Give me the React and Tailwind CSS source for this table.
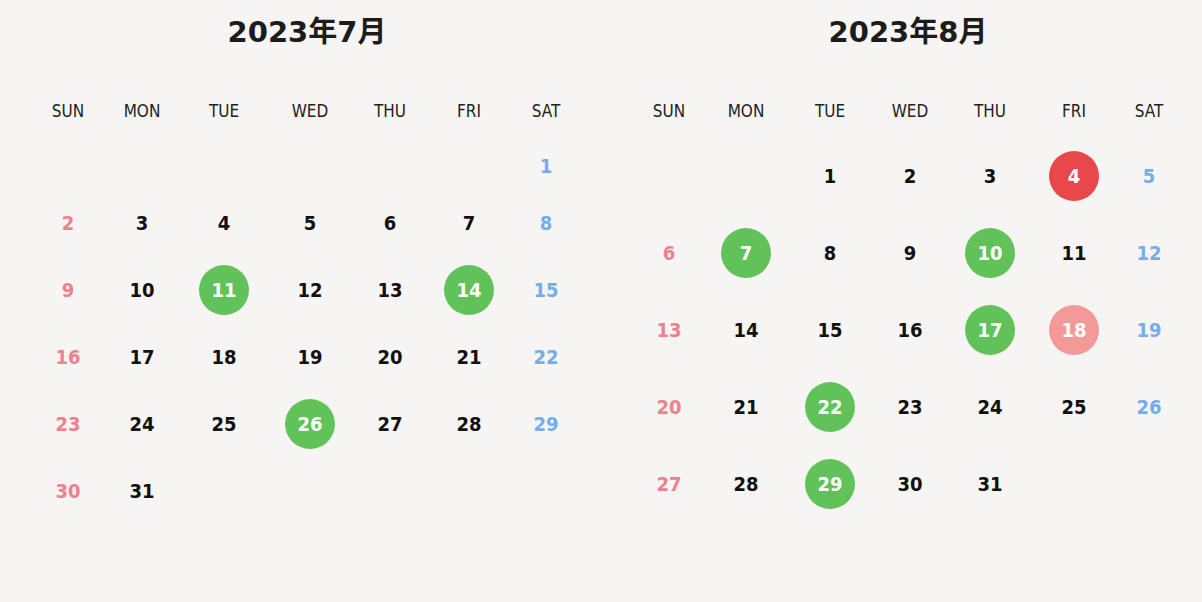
import React from "react";

const DAYS = ["SUN", "MON", "TUE", "WED", "THU", "FRI", "SAT"];

const july = {
  title: "2023年7月",
  cols: "grid-cols-[76px_72px_92px_80px_80px_78px_76px]",
  weeks: [
    [null, null, null, null, null, null, 1],
    [2, 3, 4, 5, 6, 7, 8],
    [9, 10, 11, 12, 13, 14, 15],
    [16, 17, 18, 19, 20, 21, 22],
    [23, 24, 25, 26, 27, 28, 29],
    [30, 31, null, null, null, null, null],
  ],
  marks: { 11: "green", 14: "green", 26: "green" },
};

const august = {
  title: "2023年8月",
  cols: "grid-cols-[74px_80px_88px_72px_88px_80px_70px]",
  weeks: [
    [null, null, 1, 2, 3, 4, 5],
    [6, 7, 8, 9, 10, 11, 12],
    [13, 14, 15, 16, 17, 18, 19],
    [20, 21, 22, 23, 24, 25, 26],
    [27, 28, 29, 30, 31, null, null],
  ],
  marks: { 4: "red", 7: "green", 10: "green", 17: "green", 18: "pink", 22: "green", 29: "green" },
};

const circleClass = {
  green: "bg-[#62c25a]",
  red: "bg-[#e8474b]",
  pink: "bg-[#f39a98]",
};

function Cell({ d, col, mark }) {
  if (d === null) return <div />;
  let color = "text-[#111111]";
  if (col === 0) color = "text-[#f0808c]";
  if (col === 6) color = "text-[#74adec]";
  return (
    <div className="flex items-center justify-center">
      {mark ? (
        <div
          className={`w-[50px] h-[50px] rounded-full flex items-center justify-center text-white ${circleClass[mark]}`}
        >
          {d}
        </div>
      ) : (
        <span className={color}>{d}</span>
      )}
    </div>
  );
}

function Calendar({ cal, className }) {
  return (
    <div className={`flex flex-col pt-[12px] ${className}`}>
      <div
        className="h-[40px] leading-[40px] text-center text-[29px] font-bold text-[#1c1c1c] mb-[30px]"
        style={{ fontFamily: '"DejaVu Sans", "Noto Sans CJK JP", sans-serif' }}
      >
        {cal.title}
      </div>
      <div className={`grid ${cal.cols} h-[55px] pt-[4px] items-center text-[17px] text-[#222222]`}>
        {DAYS.map((d) => (
          <div key={d} className="text-center">
            {d}
          </div>
        ))}
      </div>
      {cal.weeks.map((w, i) => {
        const hasCircle = w.some((d) => d !== null && cal.marks[d]);
        return (
          <div
            key={i}
            className={`grid ${cal.cols} ${hasCircle ? "h-[77px]" : "h-[57px]"} text-[20px] font-bold`}
          >
            {w.map((d, j) => (
              <Cell key={j} d={d} col={j} mark={d !== null ? cal.marks[d] : null} />
            ))}
          </div>
        );
      })}
    </div>
  );
}

export default function App() {
  return (
    <div
      className="w-[1202px] h-[602px] bg-[#f7f5f3] flex overflow-hidden"
      style={{ fontFamily: '"DejaVu Sans Condensed", "DejaVu Sans", "Noto Sans CJK JP", sans-serif' }}
    >
      <Calendar cal={july} className="ml-[30px] w-[554px]" />
      <Calendar cal={august} className="ml-[48px] w-[552px]" />
    </div>
  );
}
